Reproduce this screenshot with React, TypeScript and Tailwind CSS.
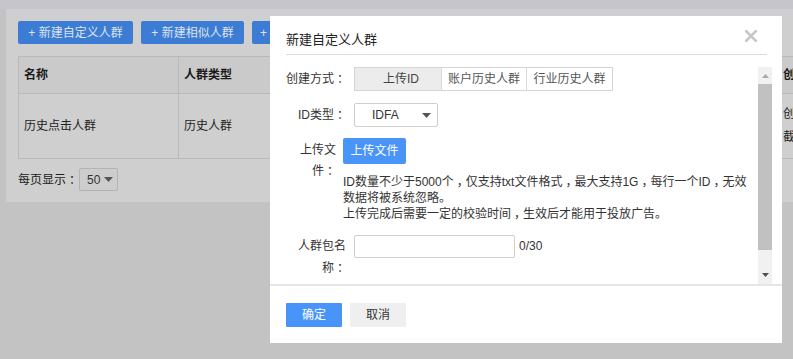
import React from "react";

function T({ children }: { children: string }) {
  const parts = children.split(/([：，])/);
  return (
    <>
      {parts.map((p, i) =>
        p === "：" || p === "，" ? (
          <span key={i} className="pl-[3px] tracking-[-3px]">
            {p}
          </span>
        ) : (
          <React.Fragment key={i}>{p}</React.Fragment>
        )
      )}
    </>
  );
}

function Caret({ color = "#555" }: { color?: string }) {
  return (
    <svg width="9" height="5" viewBox="0 0 9 5">
      <path d="M0 0 L9 0 L4.5 5 Z" fill={color} />
    </svg>
  );
}

function ScrollBar() {
  return (
    <div className="flex h-full w-[14px] shrink-0 flex-col bg-[#f1f1f1]">
      <div className="flex h-[17px] items-center justify-center">
        <svg width="7" height="4" viewBox="0 0 7 4">
          <path d="M0 4 L7 4 L3.5 0 Z" fill="#a9a9a9" />
        </svg>
      </div>
      <div className="h-[166px] bg-[#c1c1c1]" />
      <div className="flex flex-1 flex-col justify-end">
        <div className="flex h-[18px] items-center justify-center">
          <svg width="7" height="4" viewBox="0 0 7 4">
            <path d="M0 0 L7 0 L3.5 4 Z" fill="#505050" />
          </svg>
        </div>
      </div>
    </div>
  );
}

export default function App() {
  return (
    <div className="relative h-[359px] w-[793px] overflow-hidden bg-[#c3c3c3] font-['Liberation_Sans','Noto_Sans_CJK_SC',sans-serif] text-[12px] text-[#222]">
      {/* background page */}
      <div className="h-[9px] bg-[#c5c5cb]" />
      <div className="ml-[6px] h-[193px] w-[900px] bg-[#cfcfcf] px-[12px] pt-[12px]">
        <div className="flex gap-[8px]">
          <div className="flex h-[23px] w-[115px] items-center justify-center rounded-[2px] bg-[#3d7cd4] text-[#dde3ec]">
            + 新建自定义人群
          </div>
          <div className="flex h-[23px] w-[103px] items-center justify-center rounded-[2px] bg-[#3d7cd4] text-[#dde3ec]">
            + 新建相似人群
          </div>
          <div className="flex h-[23px] w-[18px] items-center overflow-hidden rounded-l-[2px] bg-[#3d7cd4] pl-[8px] text-[#dde3ec]">
            +
          </div>
        </div>
        <div className="mt-[12px] w-[880px] border border-[#b9b9b9]">
          <div className="flex h-[37px] border-b border-[#b9b9b9] bg-[#cacaca] font-bold text-[#1a1a1a]">
            <div className="flex w-[160px] items-center border-r border-[#b9b9b9] pl-[5px]">名称</div>
            <div className="flex w-[599px] items-center border-r border-[#b9b9b9] pl-[5px]">人群类型</div>
            <div className="flex flex-1 items-center pl-[5px]">创建时间</div>
          </div>
          <div className="flex h-[64px]">
            <div className="flex w-[160px] items-center border-r border-[#b9b9b9] pl-[5px]">历史点击人群</div>
            <div className="flex w-[599px] items-center border-r border-[#b9b9b9] pl-[5px]">历史人群</div>
            <div className="flex flex-1 flex-col justify-center pl-[5px] leading-[23px]">
              <div>创建：2018-01-01</div>
              <div>截止：2018-12-31</div>
            </div>
          </div>
        </div>
        <div className="mt-[9px] flex items-center">
          <span className="whitespace-nowrap">
            <T>每页显示：</T>
          </span>
          <div className="ml-[1px] flex h-[23px] w-[39px] items-center justify-between rounded-[2px] border border-[#b3b3b3] bg-[#cdcdcd] pl-[7px] pr-[4px] text-[#333]">
            <span>50</span>
            <Caret color="#555" />
          </div>
        </div>
      </div>

      {/* modal */}
      <div className="absolute left-[270px] top-[16px] flex h-[327px] w-[512px] flex-col bg-white text-[#333]">
        <div className="ml-[16px] mr-[15px] border-b border-[#dcdcdc] pb-[6px] pt-[16px] text-[13px] leading-[16px] text-[#222]">
          新建自定义人群
        </div>
        <div className="absolute right-[25px] top-[14px]">
          <svg width="12" height="12" viewBox="0 0 12 12">
            <path d="M1 1 L11 11 M11 1 L1 11" stroke="#c8c8c8" strokeWidth="2.6" strokeLinecap="round" />
          </svg>
        </div>

        <div className="mt-[12px] flex h-[217px] pl-[16px] pr-[10px]">
          <div className="flex-1 overflow-hidden">
            {/* row 1 */}
            <div className="flex items-center">
              <div className="w-[60px] whitespace-nowrap text-right">
                <T>创建方式：</T>
              </div>
              <div className="ml-[8px] flex h-[24px] border border-[#d4d4d4]">
                <div className="flex w-[86px] items-center justify-center bg-[#ececec] pl-[6px] text-[#444]">上传ID</div>
                <div className="flex w-[85px] items-center justify-center border-l border-[#d9d9d9] text-[#555]">账户历史人群</div>
                <div className="flex w-[86px] items-center justify-center border-l border-[#d9d9d9] text-[#555]">行业历史人群</div>
              </div>
            </div>
            {/* row 2 */}
            <div className="mt-[12px] flex items-center">
              <div className="w-[60px] whitespace-nowrap text-right">
                <T>ID类型：</T>
              </div>
              <div className="ml-[8px] flex h-[24px] w-[84px] items-center justify-between rounded-[2px] border border-[#cfcfcf] pl-[17px] pr-[6px] text-[#333]">
                <span>IDFA</span>
                <Caret color="#555" />
              </div>
            </div>
            {/* row 3 */}
            <div className="mt-[11px] flex items-start">
              <div className="ml-[12px] w-[38px] pt-[2px] text-right leading-[21px]">
                上传文<br />
                <T>件：</T>
              </div>
              <div className="ml-[7px]">
                <div className="flex h-[26px] w-[63px] items-center justify-center rounded-[2px] bg-[#4994f8] text-white">
                  上传文件
                </div>
                <div className="mt-[10px] whitespace-nowrap leading-[16px] text-[#333]">
                  <T>ID数量不少于5000个，仅支持txt文件格式，最大支持1G，每行一个ID，无效</T>
                  <br />
                  数据将被系统忽略。
                  <br />
                  <T>上传完成后需要一定的校验时间，生效后才能用于投放广告。</T>
                </div>
              </div>
            </div>
            {/* row 4 */}
            <div className="mt-[13px] flex items-start">
              <div className="ml-[12px] w-[48px] text-right leading-[22px]">
                人群包名<br />
                <T>称：</T>
              </div>
              <div className="ml-[8px] h-[23px] w-[161px] rounded-[2px] border border-[#cfcfcf]" />
              <div className="ml-[4px] leading-[23px]">0/30</div>
            </div>
          </div>
          <ScrollBar />
        </div>

        <div className="border-t-2 border-[#e5e5e5] pb-[16px] pl-[16px] pt-[17px]">
          <div className="flex gap-[8px]">
            <div className="flex h-[24px] w-[56px] items-center justify-center rounded-[1px] bg-[#4994f8] text-white">确定</div>
            <div className="flex h-[24px] w-[56px] items-center justify-center rounded-[1px] bg-[#efefef] text-[#333]">取消</div>
          </div>
        </div>
      </div>
    </div>
  );
}
